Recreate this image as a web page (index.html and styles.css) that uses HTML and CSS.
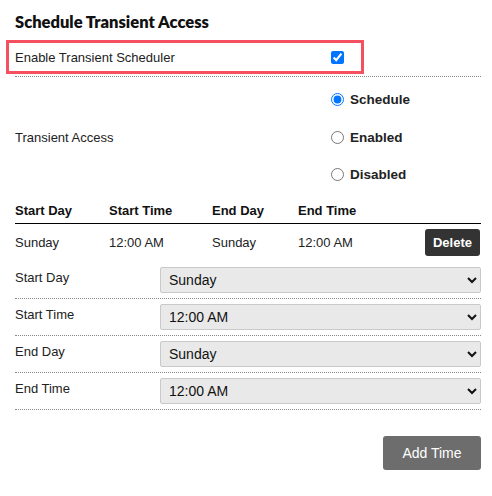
FILE: index.html
```html
<!DOCTYPE html>
<html>
<head>
<meta charset="utf-8">
<link rel="stylesheet" href="styles.css">
</head>
<body>
<div class="page">
  <h2 class="title">Schedule Transient Access</h2>
  <div class="enable-row">
    <label class="enable-box">
      <span>Enable Transient Scheduler</span>
      <input type="checkbox" class="check" checked>
    </label>
  </div>
  <div class="access">
    <div class="access-label">Transient Access</div>
    <div class="radios">
      <label class="radio"><input type="radio" name="ta" checked><span>Schedule</span></label>
      <label class="radio"><input type="radio" name="ta"><span>Enabled</span></label>
      <label class="radio"><input type="radio" name="ta"><span>Disabled</span></label>
    </div>
  </div>
  <div class="table">
    <div class="thead">
      <div>Start Day</div><div>Start Time</div><div>End Day</div><div>End Time</div><div></div>
    </div>
    <div class="trow">
      <div>Sunday</div><div>12:00 AM</div><div>Sunday</div><div>12:00 AM</div>
      <div><button class="delete">Delete</button></div>
    </div>
  </div>
  <div class="form">
    <div class="frow"><div class="flabel">Start Day</div><select class="sel"><option>Sunday</option></select></div>
    <div class="frow"><div class="flabel">Start Time</div><select class="sel"><option>12:00 AM</option></select></div>
    <div class="frow"><div class="flabel">End Day</div><select class="sel"><option>Sunday</option></select></div>
    <div class="frow"><div class="flabel">End Time</div><select class="sel"><option>12:00 AM</option></select></div>
  </div>
  <div class="actions">
    <button class="add">Add Time</button>
  </div>
</div>
</body>
</html>
```

FILE: styles.css
```css
html, body {
  margin: 0;
  padding: 0;
  background: #fff;
}
body {
  font-family: "Liberation Sans", Arial, sans-serif;
  font-size: 13px;
  color: #222;
}
.page {
  padding: 0 11px 0 15px;
}
.title {
  font-family: "Lato", "Open Sans", sans-serif;
  font-weight: 800;
  font-size: 16.5px;
  line-height: 20px;
  height: 20px;
  margin: 12px 0 0 0;
  color: #111;
}
.enable-row {
  margin-top: 8px;
  height: 37px;
  padding-top: 3px;
  box-sizing: border-box;
  border-bottom: 1px dotted #888;
}
.enable-box {
  display: flex;
  align-items: center;
  justify-content: space-between;
  margin: 0 0 0 -6px;
  width: 352px;
  height: 28px;
  padding: 0 17px 0 6px;
  box-sizing: border-box;
  outline: 3px solid #f4505f;
}
.check {
  margin: 0;
  width: 13px;
  height: 13px;
}
.access {
  display: grid;
  grid-template-columns: 316px 1fr;
  align-items: center;
  padding-top: 4px;
}
.radios {
  display: flex;
  flex-direction: column;
}
.radio {
  display: flex;
  align-items: center;
  height: 37.5px;
  font-weight: bold;
  font-size: 13.5px;
}
.radio input {
  margin: 0 6px 0 0;
  width: 13px;
  height: 13px;
}
.table {
  margin-top: 5px;
}
.thead, .trow {
  display: grid;
  grid-template-columns: 94px 103px 86px 1fr auto;
  align-items: center;
}
.thead {
  height: 24px;
  font-weight: bold;
  border-bottom: 1px solid #000;
  color: #111;
}
.trow {
  height: 38px;
}
.delete {
  background: #333;
  color: #fff;
  border: none;
  border-radius: 3px;
  font-family: "Liberation Sans", Arial, sans-serif;
  font-weight: bold;
  font-size: 13px;
  width: 55px;
  height: 27px;
  padding: 0;
  margin-right: 1px;
}
.frow {
  display: grid;
  grid-template-columns: 145px 1fr;
  align-items: center;
  height: 37px;
  box-sizing: border-box;
  border-bottom: 1px dotted #888;
}
.flabel {
  padding-bottom: 4px;
}
.sel {
  height: 26px;
  background: #e9e9e9;
  border: 1px solid #c9c9c9;
  border-radius: 2px;
  font-family: "Liberation Sans", Arial, sans-serif;
  font-size: 14px;
  color: #111;
  padding: 0 4px;
  margin-top: 0;
}
.actions {
  display: flex;
  justify-content: flex-end;
  margin-top: 26px;
}
.add {
  background: #6d6d6d;
  color: #fff;
  border: none;
  border-radius: 3px;
  font-family: "Liberation Sans", Arial, sans-serif;
  font-size: 14px;
  width: 98px;
  height: 34px;
  padding: 0;
}
```
